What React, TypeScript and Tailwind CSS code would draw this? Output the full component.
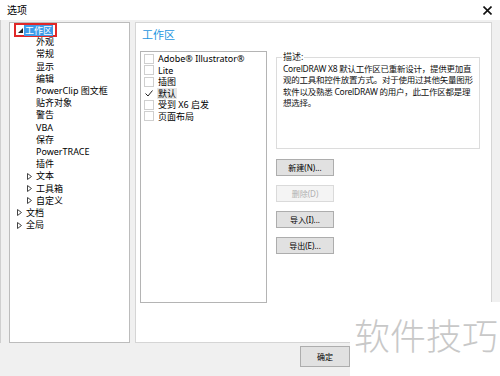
import React from 'react';

const tree = [
  { level: 0, exp: 'open', label: '工作区', selected: true },
  { level: 1, label: '外观' },
  { level: 1, label: '常规' },
  { level: 1, label: '显示' },
  { level: 1, label: '编辑' },
  { level: 1, label: 'PowerClip 图文框' },
  { level: 1, label: '贴齐对象' },
  { level: 1, label: '警告' },
  { level: 1, label: 'VBA' },
  { level: 1, label: '保存' },
  { level: 1, label: 'PowerTRACE' },
  { level: 1, label: '插件' },
  { level: 1, exp: 'closed', label: '文本' },
  { level: 1, exp: 'closed', label: '工具箱' },
  { level: 1, exp: 'closed', label: '自定义' },
  { level: 0, exp: 'closed', label: '文档' },
  { level: 0, exp: 'closed', label: '全局' },
];

const workspaces = [
  { label: 'Adobe® Illustrator®' },
  { label: 'Lite' },
  { label: '插图' },
  { label: '默认', checked: true },
  { label: '受到 X6 启发' },
  { label: '页面布局' },
];

function Closed() {
  return (
    <svg width="5" height="7" viewBox="0 0 5 7" className="shrink-0">
      <path d="M0.5 0.5 L4.5 3.5 L0.5 6.5 Z" fill="none" stroke="#444" strokeWidth="1" />
    </svg>
  );
}

function Open() {
  return (
    <svg width="5" height="5" viewBox="0 0 5 5" className="shrink-0">
      <path d="M5 0 L5 5 L0 5 Z" fill="#222" />
    </svg>
  );
}

function TreeRow({ item }) {
  const pad = item.level === 0 ? 'pl-[7px]' : 'pl-[17px]';
  if (item.selected) {
    return (
      <div className="h-[12.2px] flex items-center pl-[4px]">
        <div className="flex items-center h-[14px] pl-[2px] pr-[2px] border-2 border-[#e02828]">
          <Open />
          <span className="ml-[1px] bg-[#3d9be9] text-white px-[1px] leading-[11px]">{item.label}</span>
        </div>
      </div>
    );
  }
  return (
    <div className={`h-[12.2px] flex items-center ${pad}`}>
      <div className="w-[6px] flex items-center">{item.exp === 'closed' && <Closed />}</div>
      <span className="ml-[3px] leading-[12px] whitespace-nowrap">{item.label}</span>
    </div>
  );
}

function Btn({ label, disabled }) {
  return (
    <div
      className={`w-[58px] h-[17px] flex items-center justify-center text-[8px] border ${
        disabled ? 'bg-[#f4f4f4] border-[#dadada] text-[#b0b0b0]' : 'bg-[#e1e1e1] border-[#adadad] text-black'
      }`}
    >
      {label}
    </div>
  );
}

export default function App() {
  return (
    <div className="relative w-[500px] h-[376px] overflow-hidden bg-[#f0f0f0] text-[9px] text-black font-['Noto_Sans','Noto_Sans_CJK_SC',sans-serif]">
      <div className="h-[20px] bg-white flex items-center justify-between pl-[7px] pr-[8px]">
        <span className="text-[10px]">选项</span>
        <svg width="9" height="9" viewBox="0 0 9 9">
          <path d="M0.5 0.5 L8.5 8.5 M8.5 0.5 L0.5 8.5" stroke="#111" strokeWidth="1.6" />
        </svg>
      </div>

      <div className="flex pt-[2px] pl-[8px] gap-[5px] border-l border-[#cfcfcf]">
        <div className="w-[121px] h-[321px] bg-white border border-[#bcbcbc] pt-[1px]">
          {tree.map((t) => (
            <TreeRow key={t.label} item={t} />
          ))}
        </div>

        <div className="w-[357px] h-[321px] bg-white border border-[#d5d5d5] pl-[4px] pt-[4px]">
          <div className="pl-[2px] h-[16px] text-[11px] leading-[16px] text-[#1e96e0]">工作区</div>
          <div className="flex mt-[8px]">
            <div className="w-[127px] h-[252px] border border-[#b4b4b4] pt-[1px] pl-[3px]">
              {workspaces.map((w) => (
                <div key={w.label} className="h-[11.5px] flex items-center">
                  {w.checked ? (
                    <span className="w-[10px] h-[10px] flex items-center justify-center">
                      <svg width="8" height="7" viewBox="0 0 8 7">
                        <path d="M0.5 3.5 L3 6 L7.5 0.5" fill="none" stroke="#222" strokeWidth="1" />
                      </svg>
                    </span>
                  ) : (
                    <span className="w-[10px] h-[10px] border border-[#cfcfcf] bg-white" />
                  )}
                  <span className={`ml-[3px] leading-[11px] whitespace-nowrap ${w.checked ? 'bg-[#e6e6e6] px-[1px]' : 'px-[1px]'}`}>
                    {w.label}
                  </span>
                </div>
              ))}
            </div>

            <div className="ml-[9px] flex flex-col">
              <fieldset className="w-[202px] h-[97px] border border-[#dcdcdc] px-[6px] mt-[1px]">
                <legend className="px-[1px] ml-[-1px] leading-[10px] text-[#222]">描述:</legend>
                <div className="text-[8.5px] leading-[11.4px] tracking-[-0.25px] whitespace-nowrap text-[#111] mt-[1px]">
                  <div>CorelDRAW X8 默认工作区已重新设计，提供更加直</div>
                  <div>观的工具和控件放置方式。对于使用过其他矢量图形</div>
                  <div>软件以及熟悉 CorelDRAW 的用户，此工作区都是理</div>
                  <div>想选择。</div>
                </div>
              </fieldset>
              <div className="flex flex-col gap-[9px] mt-[10px]">
                <Btn label="新建(N)..." />
                <Btn label="删除(D)" disabled />
                <Btn label="导入(I)..." />
                <Btn label="导出(E)..." />
              </div>
            </div>
          </div>
        </div>
      </div>

      <div className="flex pl-[300px] pt-[3px]">
        <div className="w-[50px] h-[21px] bg-[#e1e1e1] border border-[#adadad] flex items-center justify-center text-[8px]">
          确定
        </div>
      </div>

      <div className="absolute left-[350px] top-[302px] w-[150px] h-[74px] bg-white flex items-start pl-[4px] pt-[12px]">
        <span className="text-[36px] leading-[40px] font-light text-[#c8c8c8] font-['Noto_Sans_CJK_SC',sans-serif] whitespace-nowrap">
          软件技巧
        </span>
      </div>
    </div>
  );
}
